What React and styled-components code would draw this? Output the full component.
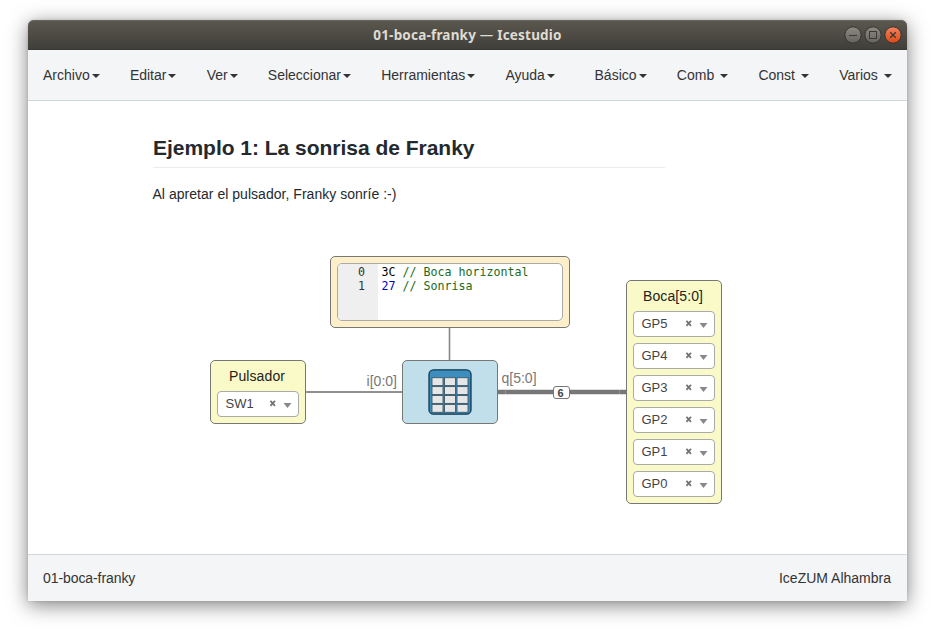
import React from "react";
import styled, { createGlobalStyle } from "styled-components";

const GlobalStyle = createGlobalStyle`
  * { box-sizing: border-box; }
  body {
    margin: 0;
    background: #fff;
    color: #333;
    font: 14px/20px "Liberation Sans", Arial, sans-serif;
    overflow: hidden;
  }
`;

const Desktop = styled.div`
  height: 640px;
  padding: 20px 29px 39px 28px;
`;

const Window = styled.div`
  height: 581px;
  display: flex;
  flex-direction: column;
  border-radius: 6px 6px 0 0;
  background: #fff;
  box-shadow: 0 4px 20px rgba(0, 0, 0, 0.5), 0 0 3px rgba(0, 0, 0, 0.14);
`;

const TitleBar = styled.header`
  height: 30px;
  flex: none;
  display: grid;
  grid-template-columns: 1fr auto 1fr;
  align-items: center;
  padding: 0 5px;
  border-radius: 6px 6px 0 0;
  background: linear-gradient(#5b584f, #403e39);
  box-shadow: inset 0 1px #66645b, inset 0 -1px #3a3934;
`;

const WindowTitle = styled.h1`
  grid-column: 2;
  margin: 0;
  color: #dfdbd2;
  font: bold 13.5px/30px "Noto Sans", "Open Sans", sans-serif;
  letter-spacing: 0.2px;
  white-space: pre;
`;

const TitleDash = styled.span`
  font-weight: normal;
`;

const WindowButtons = styled.div`
  display: flex;
  gap: 2px;
  justify-content: flex-end;
`;

const WindowButton = styled.svg`
  width: 18px;
  height: 18px;
`;

const NavBar = styled.nav`
  height: 51px;
  flex: none;
  display: flex;
  justify-content: space-between;
  background: #f4f5f7;
  border-bottom: 1px solid #cfd8dc;
`;

const MenuGroup = styled.div`
  display: flex;
`;

const MenuItem = styled.a`
  padding: 15px ${(p) => p.$gap}px 15px 15px;
  white-space: pre;
`;

const Caret = styled.span`
  display: inline-block;
  margin-left: 2px;
  vertical-align: middle;
  border-top: 4px solid #333;
  border-left: 4px solid transparent;
  border-right: 4px solid transparent;
`;

const Canvas = styled.main`
  flex: 1;
  position: relative;
`;

const Info = styled.section`
  position: absolute;
  left: 125px;
  top: 33px;
  width: 512px;
  color: #24292e;
`;

const Heading = styled.h2`
  margin: 0 0 16px;
  height: 34px;
  border-bottom: 1px solid #eaecef;
  font-size: 21px;
  line-height: 28px;
  letter-spacing: -0.02px;
  white-space: nowrap;
`;

const Paragraph = styled.p`
  margin: 0 0 0 -0.5px;
  line-height: 21px;
  letter-spacing: 0.03px;
`;

const Wires = styled.svg`
  position: absolute;
  inset: 0;
  width: 100%;
  height: 100%;
`;

const Block = styled.div`
  position: absolute;
  left: ${(p) => p.$x}px;
  top: ${(p) => p.$y}px;
  width: ${(p) => p.$w}px;
  height: ${(p) => p.$h}px;
  background: ${(p) => p.$fill};
  border: 1px solid #777;
  border-radius: 5px;
`;

const IoBlock = styled(Block)`
  display: flex;
  flex-direction: column;
  gap: 6px;
  padding: 5px 6px;
`;

const IoLabel = styled.div`
  height: 19px;
  line-height: 20px;
  padding-right: 2px;
  text-align: center;
  color: #222;
  letter-spacing: 0.1px;
`;

const Select = styled.div`
  height: 26px;
  flex: none;
  display: flex;
  align-items: center;
  padding: 0 3px 0 7.5px;
  background: #fff;
  border: 1px solid #aaa;
  border-radius: 4px;
  color: #444;
  font-size: 13px;
  line-height: 24px;
`;

const SelectValue = styled.span`
  flex: 1;
`;

const SelectIcons = styled.svg`
  width: 26px;
  height: 24px;
`;

const TableBlock = styled(Block)`
  display: flex;
  align-items: center;
  justify-content: center;
`;

const MemoryBlock = styled(Block)`
  padding: 6px;
`;

const Editor = styled.div`
  height: 58px;
  display: grid;
  grid-template-columns: 40px 1fr;
  border: 1px solid #aaa;
  border-radius: 5px;
  overflow: hidden;
  background: #fff;
  font: 11.63px/14px "DejaVu Sans Mono", monospace;
`;

const Gutter = styled.div`
  padding: 1px 13px 0 0;
  background: #efefef;
  color: #333;
  text-align: right;
`;

const Code = styled.div`
  padding: 1px 0 0 3.6px;
  white-space: pre;
`;

const Token = styled.span`
  color: ${(p) => p.$color};
`;

const PortLabel = styled.span`
  position: absolute;
  left: ${(p) => p.$x}px;
  top: ${(p) => p.$y}px;
  color: #777;
`;

const BusSize = styled.span`
  position: absolute;
  left: 525px;
  top: 285px;
  width: 17px;
  height: 13px;
  padding-right: 2px;
  border: 1px solid #777;
  border-radius: 3px;
  background: #fff;
  color: #444;
  font-size: 11px;
  font-weight: bold;
  line-height: 12px;
  text-align: center;
`;

const Footer = styled.footer`
  height: 47px;
  flex: none;
  display: flex;
  justify-content: space-between;
  padding: 13px 16px 0 15px;
  background: #f4f5f7;
  border-top: 1px solid #cfd8dc;
`;

const ProjectName = styled.span`
  letter-spacing: -0.08px;
`;

const leftMenus = ["Archivo", "Editar", "Ver", "Seleccionar", "Herramientas", "Ayuda"];
const rightMenus = ["Básico", "Comb ", "Const ", "Varios "];
const outputPins = ["GP5", "GP4", "GP3", "GP2", "GP1", "GP0"];

function Menus({ items, gap }) {
  return (
    <MenuGroup>
      {items.map((label) => (
        <MenuItem key={label} $gap={gap}>
          {label}
          <Caret />
        </MenuItem>
      ))}
    </MenuGroup>
  );
}

function PinSelect({ value }) {
  return (
    <Select>
      <SelectValue>{value}</SelectValue>
      <SelectIcons viewBox="0 0 26 24">
        <path d="M1.4 8.9l4.6 5M6 8.9l-4.6 5" stroke="#777" strokeWidth="1.9" />
        <path d="M14.5 11h8l-4 5z" fill="#888" />
      </SelectIcons>
    </Select>
  );
}

function ControlButton({ kind }) {
  const close = kind === "close";
  const id = `control-${kind}`;
  return (
    <WindowButton viewBox="0 0 18 18">
      <defs>
        <linearGradient id={id} x1="0" y1="0" x2="0" y2="1">
          <stop offset="0" stopColor={close ? "#f5835f" : "#8c8a83"} />
          <stop offset="1" stopColor={close ? "#dd4814" : "#65635c"} />
        </linearGradient>
      </defs>
      <circle cx="9" cy="9" r="8.2" fill={`url(#${id})`} stroke="#34332e" strokeWidth="1" />
      <g fill="none" stroke="#3a3934" strokeWidth="1">
        {kind === "minimize" && <path d="M5 9.5h8" />}
        {kind === "maximize" && <rect x="5.5" y="5.5" width="7" height="7" />}
        {close && <path d="M6.2 6.2l5.6 5.6M11.8 6.2l-5.6 5.6" strokeWidth="1.3" />}
      </g>
    </WindowButton>
  );
}

function TableIcon() {
  const cells = [];
  for (let row = 0; row < 4; row += 1) {
    for (let col = 0; col < 3; col += 1) {
      cells.push(
        <rect key={`${row}-${col}`} x={4 + col * 12.5} y={8.7 + row * 8.9} width="11" height="7.9" />
      );
    }
  }
  return (
    <svg width="44" height="46" viewBox="0 0 44 46">
      <rect x="1" y="0.8" width="42" height="44.4" rx="4.5" fill="#3d8ebf" stroke="#123a50" strokeWidth="1.3" />
      <g fill="#e6e6e6" stroke="#3a5a6c" strokeWidth="0.9">{cells}</g>
    </svg>
  );
}

export default function App() {
  return (
    <Desktop>
      <GlobalStyle />
      <Window>
        <TitleBar>
          <WindowTitle>
            01-boca-franky <TitleDash>—</TitleDash> Icestudio
          </WindowTitle>
          <WindowButtons>
            <ControlButton kind="minimize" />
            <ControlButton kind="maximize" />
            <ControlButton kind="close" />
          </WindowButtons>
        </TitleBar>
        <NavBar>
          <Menus items={leftMenus} gap={15.2} />
          <Menus items={rightMenus} gap={15.3} />
        </NavBar>
        <Canvas>
          <Info>
            <Heading>Ejemplo 1: La sonrisa de Franky</Heading>
            <Paragraph>Al apretar el pulsador, Franky sonríe :-)</Paragraph>
          </Info>
          <Wires>
            <path d="M421.5 227V260" stroke="#888" strokeWidth="1.6" />
            <path d="M278 291H375" stroke="#919191" strokeWidth="2" />
            <path d="M470 291H599" stroke="#777" strokeWidth="4.4" />
            <path d="M477.5 289V293M591.5 289V293" stroke="#929292" strokeWidth="1" />
          </Wires>
          <MemoryBlock $x={302} $y={155} $w={240} $h={72} $fill="#fcefc9">
            <Editor>
              <Gutter>
                <div>0</div>
                <div>1</div>
              </Gutter>
              <Code>
                <div>
                  <Token $color="#000">3C</Token> <Token $color="#1a6b1a">{"// Boca horizontal"}</Token>
                </div>
                <div>
                  <Token $color="#0000cd">27</Token> <Token $color="#1a6b1a">{"// Sonrisa"}</Token>
                </div>
              </Code>
            </Editor>
          </MemoryBlock>
          <IoBlock $x={182} $y={259} $w={96} $h={64} $fill="#fafac8">
            <IoLabel>Pulsador</IoLabel>
            <PinSelect value="SW1" />
          </IoBlock>
          <TableBlock $x={374} $y={259} $w={96} $h={64} $fill="#c0dfeb">
            <TableIcon />
          </TableBlock>
          <IoBlock $x={598} $y={179} $w={96} $h={224} $fill="#fafac8">
            <IoLabel>Boca[5:0]</IoLabel>
            {outputPins.map((pin) => (
              <PinSelect key={pin} value={pin} />
            ))}
          </IoBlock>
          <PortLabel $x={338.6} $y={270}>i[0:0]</PortLabel>
          <PortLabel $x={473.5} $y={267}>q[5:0]</PortLabel>
          <BusSize>6</BusSize>
        </Canvas>
        <Footer>
          <ProjectName>01-boca-franky</ProjectName>
          <span>IceZUM Alhambra</span>
        </Footer>
      </Window>
    </Desktop>
  );
}
